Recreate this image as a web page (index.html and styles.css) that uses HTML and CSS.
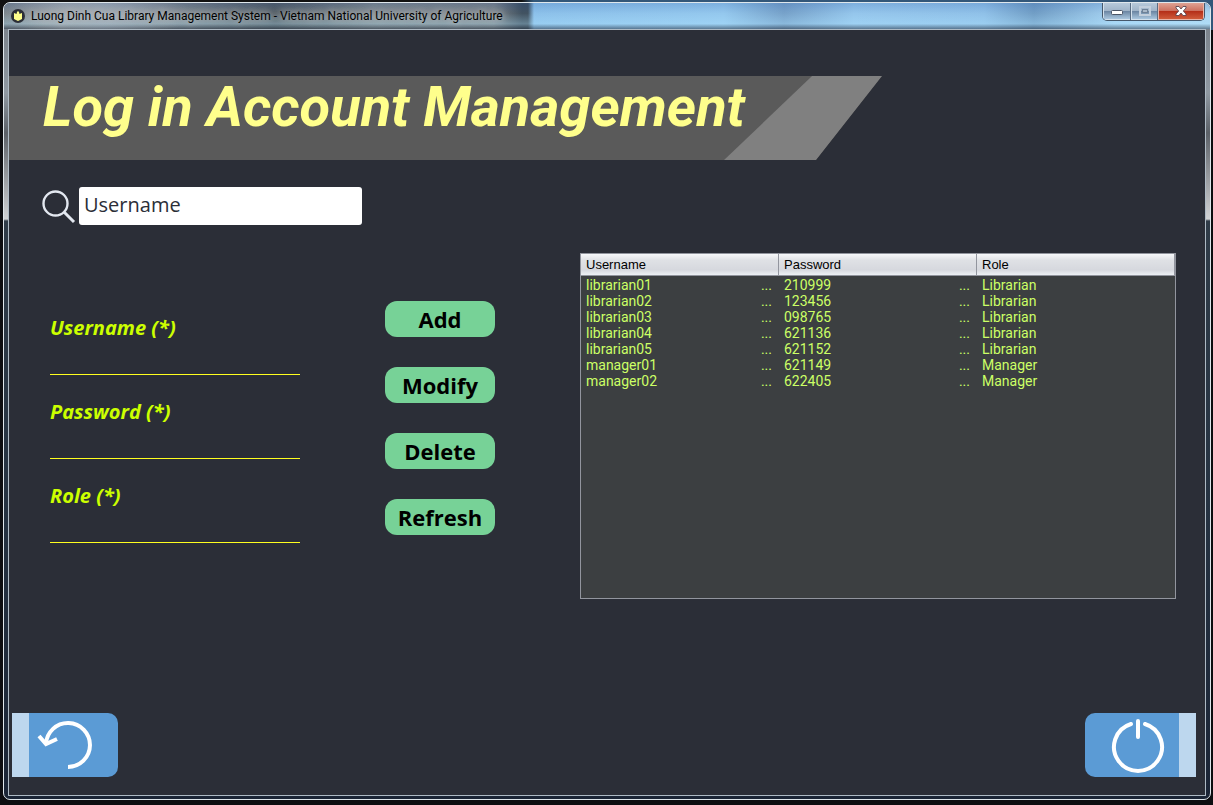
FILE: index.html
```html
<!DOCTYPE html>
<html lang="en">
<head>
<meta charset="utf-8">
<title>Luong Dinh Cua Library Management System</title>
<link rel="stylesheet" href="styles.css">
</head>
<body>
<div class="window">
  <header class="titlebar">
    <svg class="app-icon" width="14" height="14" viewBox="0 0 14 14" aria-hidden="true">
      <circle cx="7" cy="7" r="7" fill="#2b2e37"/>
      <path d="M3 4 L5.500 5 L6 3 L7 2 L8 3 L8.500 5 L11 4 V10 L8.500 11.200 L7 12 L5.500 11.200 L3 10 Z" fill="#ffff8c"/>
    </svg>
    <span class="caption">Luong Dinh Cua Library Management System - Vietnam National University of Agriculture</span>
    <div class="window-controls">
      <button class="control minimize" aria-label="Minimize">
        <svg width="12" height="6" viewBox="0 0 12 6"><rect x="0.500" y="0.500" width="11" height="4" rx="1" fill="#fff" stroke="#4a5566"/></svg>
      </button>
      <button class="control maximize" aria-label="Maximize" disabled>
        <svg width="12" height="10" viewBox="0 0 12 10"><rect x="1" y="1" width="10" height="8" fill="none" stroke="#c3cfdc" stroke-width="2"/><rect x="3.500" y="3.500" width="5" height="3" fill="#a9b8c8" stroke="#6f8196"/></svg>
      </button>
      <button class="control close" aria-label="Close">
        <svg width="12" height="10" viewBox="0 0 12 10"><path d="M1 .5H4L6 3L8 .5H11V2L8.300 5L11 8V9.500H8L6 7L4 9.500H1V8L3.700 5L1 2Z" fill="#fff" stroke="#5b4650" stroke-width=".9"/></svg>
      </button>
    </div>
  </header>
  <main class="content">
    <div class="banner"><h1 class="banner-title">Log in Account Management</h1></div>
    <form class="search" role="search">
      <label class="search-icon" for="search" aria-label="Search">
        <svg width="34" height="34" viewBox="0 0 34 34"><g fill="none" stroke="#e3e8f0" stroke-width="2.400"><circle cx="13.500" cy="13.500" r="12"/><path d="M22 22L32 32" stroke-width="3"/></g></svg>
      </label>
      <input class="search-input" id="search" type="text" value="Username">
    </form>
    <div class="workspace">
      <form class="fields" id="account">
        <label class="field">Username (*)<input class="field-input" type="text" name="username"></label>
        <label class="field">Password (*)<input class="field-input" type="text" name="password"></label>
        <label class="field">Role (*)<input class="field-input" type="text" name="role"></label>
      </form>
      <div class="actions">
        <button class="action" type="button">Add</button>
        <button class="action" type="button">Modify</button>
        <button class="action" type="button">Delete</button>
        <button class="action" type="button">Refresh</button>
      </div>
      <div class="table-pane">
        <table class="accounts">
          <thead><tr><th>Username</th><th>Password</th><th>Role</th></tr></thead>
          <tbody>
            <tr><td><div class="cell">librarian01<span>...</span></div></td><td><div class="cell">210999<span>...</span></div></td><td>Librarian</td></tr>
            <tr><td><div class="cell">librarian02<span>...</span></div></td><td><div class="cell">123456<span>...</span></div></td><td>Librarian</td></tr>
            <tr><td><div class="cell">librarian03<span>...</span></div></td><td><div class="cell">098765<span>...</span></div></td><td>Librarian</td></tr>
            <tr><td><div class="cell">librarian04<span>...</span></div></td><td><div class="cell">621136<span>...</span></div></td><td>Librarian</td></tr>
            <tr><td><div class="cell">librarian05<span>...</span></div></td><td><div class="cell">621152<span>...</span></div></td><td>Librarian</td></tr>
            <tr><td><div class="cell">manager01<span>...</span></div></td><td><div class="cell">621149<span>...</span></div></td><td>Manager</td></tr>
            <tr><td><div class="cell">manager02<span>...</span></div></td><td><div class="cell">622405<span>...</span></div></td><td>Manager</td></tr>
          </tbody>
        </table>
      </div>
    </div>
    <footer class="footer">
      <button class="nav back" type="button" aria-label="Back">
        <svg width="56" height="50" viewBox="0 0 56 50"><g fill="none" stroke="#fff" stroke-width="4"><path d="M9 24A22 22 0 1 1 31 47"/><path d="M2 16L9 24L20 19" stroke-linejoin="miter"/></g></svg>
      </button>
      <button class="nav power" type="button" aria-label="Log out">
        <svg width="54" height="56" viewBox="0 0 54 56"><g fill="none" stroke="#fff" stroke-width="4" stroke-linecap="round"><path d="M27 4V20"/><path d="M20 7A24 24 0 1 0 34 7"/></g></svg>
      </button>
    </footer>
  </main>
</div>
</body>
</html>
```
FILE: styles.css
```css
* {
  box-sizing: border-box;
}

body {
  display: flex;
  min-height: 100vh;
  margin: 0;
  padding: 2px 2px 5px 3px;
  background: linear-gradient(90deg, #111 43%, #335779 44%) top / 100% 30px no-repeat, #0d0d10;
  font-family: "Open Sans", sans-serif;
}

.window {
  flex: 1;
  display: flex;
  flex-direction: column;
  padding: 0 4px 3px;
  border: 1px solid #dfe7ec;
  border-radius: 7px;
  overflow: hidden;
  background: linear-gradient(180deg, #747b84 0, #9099a2 90px, #5c6168 130px, #d0d2d4 216px, #303c48 218px, #263342 500px, #1b2536 100%);
}

.titlebar {
  display: flex;
  align-items: flex-start;
  height: 26px;
  margin: 0 -4px;
  padding-left: 7px;
  background:
    radial-gradient(ellipse 100px 22px at 92px 12px, #a8adb3aa, #a8adb300),
    linear-gradient(180deg, #4a78b844 0, #b4dfef22 40%, #b4e8ff66 80%, #35445499 100%),
    linear-gradient(90deg, #73777b 0, #979a9d 60px, #8d98a5 100px, #777b80 160px, #464b50 270px, #777b7e 370px, #73767a 490px, #303d4b 518px, #303d4b 524px, #86bce9 530px, #8fc4ed 720px, #6e99c4 780px, #90c2eb 850px, #8abce7 980px, #6794bf 1030px, #a1cef0 1110px, #acd5f0 100%);
}

.app-icon {
  margin-top: 6px;
}

.caption {
  padding-left: 6px;
  color: #000;
  font-family: Roboto, sans-serif;
  font-size: 12px;
  line-height: 26px;
  white-space: nowrap;
  text-shadow: 0 0 8px #b6babe, 0 0 6px #b6babe;
}

.window-controls {
  display: flex;
  margin: 0 5px 0 auto;
  border: 1px solid #46586b;
  border-top: 0;
  border-radius: 0 0 5px 5px;
  overflow: hidden;
}

.control {
  display: flex;
  align-items: center;
  justify-content: center;
  width: 27px;
  height: 17px;
  padding: 0;
  border: 1px solid #d4e1ec;
  border-top: 0;
  background: linear-gradient(#b7c9da 0, #a0b4c8 48%, #6983a0 50%, #a9c6de 100%);
}

.minimize {
  width: 28px;
  padding-top: 4px;
}

.control + .control {
  box-shadow: -1px 0 #5a6e84;
}

.close {
  width: 46px;
  border-color: #e9b5a8;
  background: linear-gradient(#dfa293 0, #cc7260 48%, #b32d17 50%, #cf5b3a 100%);
}

.content {
  flex: 1;
  display: flex;
  flex-direction: column;
  padding-top: 46px;
  border: 1px solid #aebac4;
  background: #2b2e37;
}

.banner {
  width: 73%;
  height: 84px;
  padding-left: 34px;
  background: #5a5a5a;
  clip-path: polygon(0 0, 100% 0, calc(100% - 66px) 100%, 0 100%);
  position: relative;
}

.banner::after {
  content: "";
  position: absolute;
  inset: 0 0 0 auto;
  width: 158px;
  background: #808080;
  clip-path: polygon(88px 0, 100% 0, 92px 100%, 0 100%);
}

.banner-title {
  margin: 0;
  color: #ffff8c;
  font-family: Roboto, sans-serif;
  font-size: 56px;
  font-style: italic;
  font-weight: 700;
  line-height: 62px;
  white-space: nowrap;
}

.search {
  display: flex;
  align-items: center;
  margin: 27px 0 28px 33px;
}

.search-icon {
  display: flex;
  width: 37px;
  padding-top: 2px;
}

.search-input {
  width: 283px;
  height: 38px;
  padding: 0 5px 4px;
  border: 0;
  border-radius: 3px;
  background: #fff;
  color: #2b2e37;
  font: 20px "Open Sans", sans-serif;
}

.workspace {
  display: grid;
  grid-template-columns: 250px 110px 1fr;
  gap: 85px;
  padding: 0 29px 0 41px;
}

.fields {
  padding-top: 60px;
}

.field {
  display: flex;
  flex-direction: column;
  height: 84px;
  color: #ccff00;
  font-size: 20px;
  font-style: italic;
  font-weight: 700;
  line-height: 30px;
}

.field-input {
  height: 32px;
  padding: 0;
  border: 0;
  border-bottom: 1px solid #ffff1f;
  background: transparent;
  color: #ccff00;
  font: 18px "Open Sans", sans-serif;
}

.actions {
  display: flex;
  flex-direction: column;
  gap: 30px;
  padding-top: 48px;
}

.action {
  height: 36px;
  padding: 0;
  border: 0;
  border-radius: 12px;
  background: #77d297;
  color: #000;
  font: 700 22px/36px "Open Sans", sans-serif;
}

.table-pane {
  min-height: 346px;
  border: 1px solid #92959e;
  background: #3c3f41;
}

.accounts {
  width: 100%;
  border-collapse: separate;
  border-spacing: 0;
  table-layout: fixed;
  color: #ccff66;
  font: 14px/16px Roboto, sans-serif;
}

.accounts th {
  height: 22px;
  padding: 0 5px;
  border-right: 1px solid #92959e;
  border-bottom: 1px solid #92959e;
  background: linear-gradient(#f7f8fa, #dfe1e5 30%, #d6d8de 75%, #eef1f5);
  color: #000;
  font: 13px/20px "Liberation Sans", sans-serif;
  text-align: left;
}

.accounts tbody::before {
  content: "";
  display: block;
  height: 1px;
}

.accounts td {
  height: 16px;
  padding: 0 7px 0 5px;
}

.cell {
  display: flex;
  justify-content: space-between;
}

.footer {
  display: flex;
  justify-content: space-between;
  margin-top: auto;
  padding: 20px 9px 18px 3px;
}

.nav {
  display: flex;
  align-items: center;
  height: 64px;
  padding: 0;
  border: 0 solid #bdd7ee;
  background: #5b9bd5;
}

.back {
  width: 106px;
  padding-left: 8px;
  border-left-width: 17px;
  border-radius: 0 10px 10px 0;
}

.power {
  width: 111px;
  padding-left: 26px;
  border-right-width: 17px;
  border-radius: 10px 0 0 10px;
}
```
